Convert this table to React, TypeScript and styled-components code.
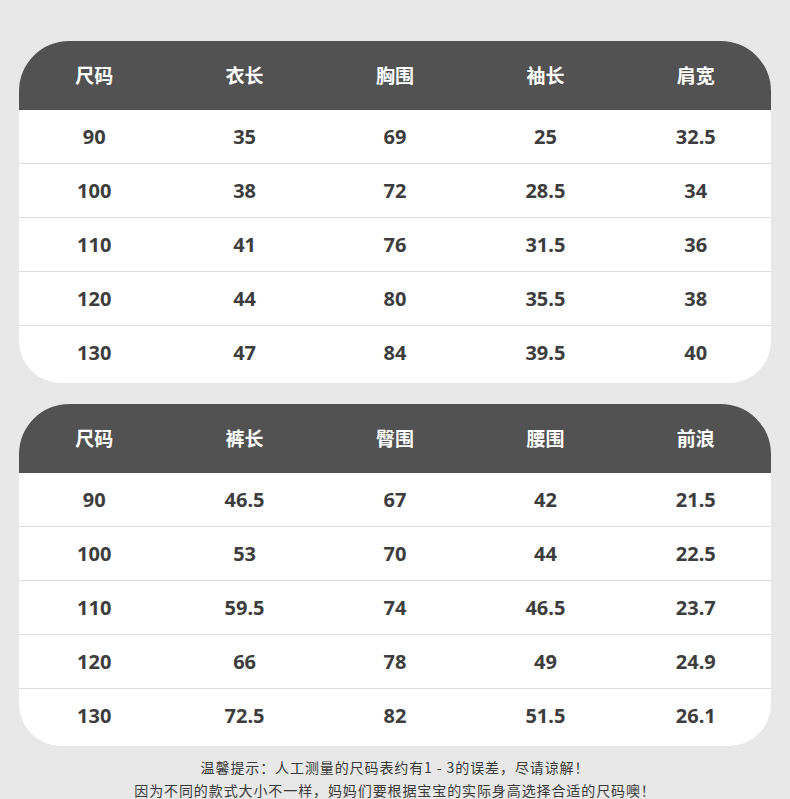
import styled, { createGlobalStyle } from "styled-components";

const GlobalStyle = createGlobalStyle`
  html, body {
    margin: 0;
    padding: 0;
    background: #e8e8e8;
  }
  body {
    font-family: "Noto Sans", "Noto Sans CJK SC", sans-serif;
  }
`;

const Page = styled.div`
  width: 790px;
  height: 799px;
  padding: 41px 19px 0;
  box-sizing: border-box;
  display: flex;
  flex-direction: column;
  gap: 21px;
  overflow: hidden;
`;

const Table = styled.div`
  flex-shrink: 0;
  background: #ffffff;
  border-radius: 50px 50px 42px 42px;
  overflow: hidden;
  padding-bottom: 4px;
`;

const HeadRow = styled.div`
  display: grid;
  grid-template-columns: repeat(5, 1fr);
  height: 69px;
  align-items: center;
  background: #525252;
`;

const Row = styled.div<{ $last?: boolean }>`
  display: grid;
  grid-template-columns: repeat(5, 1fr);
  height: 53px;
  align-items: center;
  border-bottom: ${(p) => (p.$last ? "none" : "1px solid #dcdcdc")};
`;

const HeadCell = styled.div`
  text-align: center;
  color: #ffffff;
  font-family: "Noto Sans CJK SC", sans-serif;
  font-weight: 700;
  font-size: 19px;
  margin-top: -2px;
`;

const Cell = styled.div`
  text-align: center;
  color: #3d3d3d;
  font-weight: 700;
  font-size: 20px;
`;

const Notes = styled.div`
  flex-shrink: 0;
  text-align: center;
  color: #3a3a3a;
  font-family: "Noto Sans CJK SC", sans-serif;
  font-size: 14px;
  letter-spacing: 0.9px;
  line-height: 23px;
  margin-top: -11px;
`;

type SizeData = {
  headers: string[];
  rows: string[][];
};

const tops: SizeData = {
  headers: ["尺码", "衣长", "胸围", "袖长", "肩宽"],
  rows: [
    ["90", "35", "69", "25", "32.5"],
    ["100", "38", "72", "28.5", "34"],
    ["110", "41", "76", "31.5", "36"],
    ["120", "44", "80", "35.5", "38"],
    ["130", "47", "84", "39.5", "40"],
  ],
};

const pants: SizeData = {
  headers: ["尺码", "裤长", "臀围", "腰围", "前浪"],
  rows: [
    ["90", "46.5", "67", "42", "21.5"],
    ["100", "53", "70", "44", "22.5"],
    ["110", "59.5", "74", "46.5", "23.7"],
    ["120", "66", "78", "49", "24.9"],
    ["130", "72.5", "82", "51.5", "26.1"],
  ],
};

function SizeTable({ data }: { data: SizeData }) {
  return (
    <Table>
      <HeadRow>
        {data.headers.map((h) => (
          <HeadCell key={h}>{h}</HeadCell>
        ))}
      </HeadRow>
      {data.rows.map((row, i) => (
        <Row key={row[0]} $last={i === data.rows.length - 1}>
          {row.map((v, j) => (
            <Cell key={j}>{v}</Cell>
          ))}
        </Row>
      ))}
    </Table>
  );
}

export default function App() {
  return (
    <>
      <GlobalStyle />
      <Page>
        <SizeTable data={tops} />
        <SizeTable data={pants} />
        <Notes>
          温馨提示：人工测量的尺码表约有1 - 3的误差，尽请谅解！
          <br />
          因为不同的款式大小不一样，妈妈们要根据宝宝的实际身高选择合适的尺码噢！
        </Notes>
      </Page>
    </>
  );
}
